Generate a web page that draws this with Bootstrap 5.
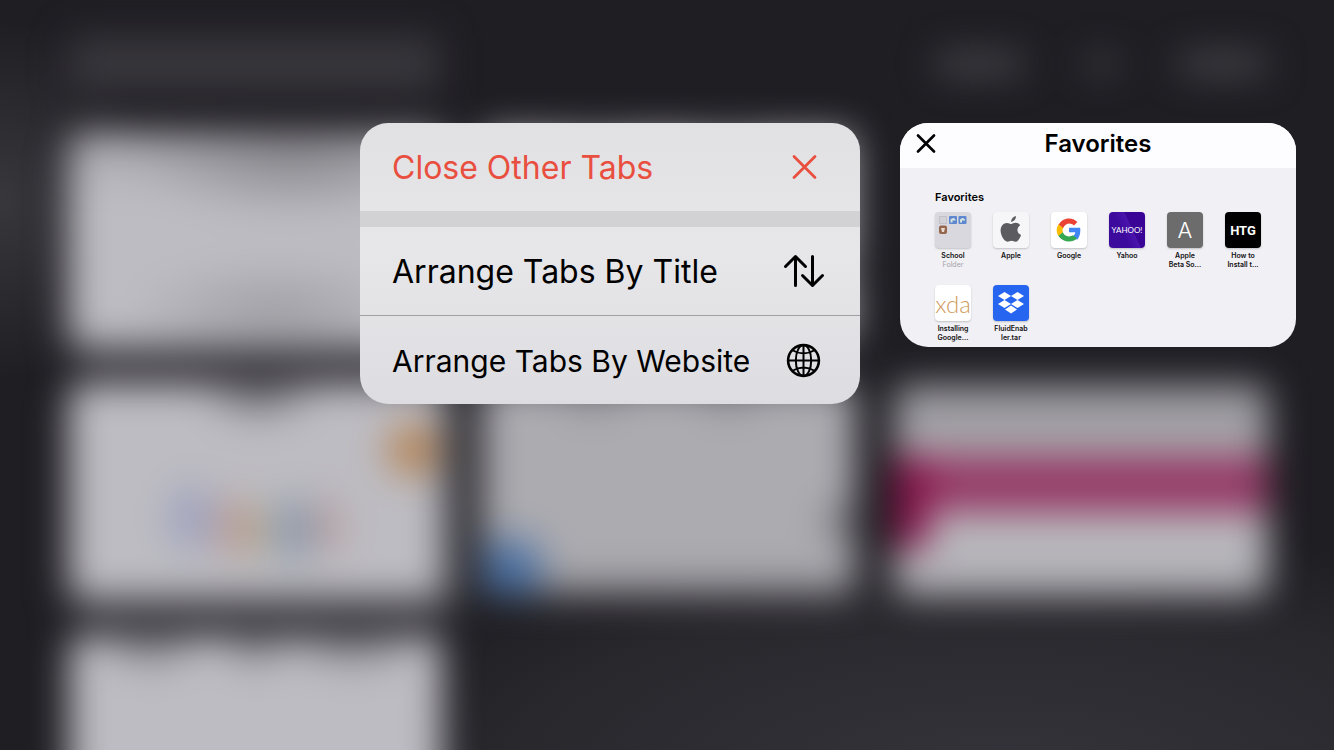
<!DOCTYPE html>
<html lang="en">
<head>
<meta charset="utf-8">
<meta name="viewport" content="width=device-width, initial-scale=1">
<title>Tabs</title>
<link href="https://cdn.jsdelivr.net/npm/bootstrap@5.3.0/dist/css/bootstrap.min.css" rel="stylesheet">
<style>
body { font-family: Inter, "Liberation Sans", sans-serif; background: #222126; color: #000; }

/* blurred tab overview behind the menu */
.overview { background: radial-gradient(ellipse 700px 260px at 1000px 780px, #35343a, #29282d 70%, transparent), radial-gradient(ellipse 160px 180px at 0 200px, #38373c, transparent), #1f1e23; }
.overview-blur { filter: blur(18px); padding: 36px 66px 0 69px; }
.overview-head { height: 56px; margin-bottom: 40px; }
.search-field { width: 370px; background: #38373c; }
.overview-grid { display: grid; grid-template-columns: repeat(3, 1fr); grid-auto-rows: 212px; gap: 40px; }
.overview-col-glow { box-shadow: 8px 14px 14px 8px #55545a; }
.tab-thumb { border-radius: 12px; background-color: #bdbcc2; }
.thumb-text { background-image: radial-gradient(ellipse 150px 50px at 55% 84%, #9f9ea3, transparent), radial-gradient(ellipse 170px 70px at 60% 8%, #88878c, transparent), linear-gradient(#a3a2a7, transparent 30%); }
.thumb-search { background-image:
  radial-gradient(circle 36px at 344px 66px, #b5814f 35%, transparent),
  radial-gradient(ellipse 32px 46px at 122px 134px, #8f97bd, transparent),
  radial-gradient(ellipse 24px 40px at 160px 142px, #b98f8c, transparent),
  radial-gradient(ellipse 24px 40px at 182px 146px, #b3a078, transparent),
  radial-gradient(ellipse 32px 46px at 224px 146px, #788ca2, transparent),
  radial-gradient(ellipse 22px 40px at 258px 142px, #b58f8f, transparent),
  radial-gradient(ellipse 64px 38px at 190px 4px, #66656a, transparent); }
.thumb-plain { background-color: #acabb0; background-image:
  radial-gradient(circle 46px at 28px 186px, #2f5f9e 15%, transparent),
  radial-gradient(ellipse 44px 26px at 100% 138px, #5d5c61, transparent),
  radial-gradient(ellipse 44px 40px at 30% 0, #88878c, transparent),
  radial-gradient(ellipse 44px 40px at 66% 0, #88878c, transparent),
  linear-gradient(#acabb000 85%, #88878c); }
.thumb-banner { background-image:
  linear-gradient(90deg, #86144a 34px, transparent 34px),
  linear-gradient(#953a66, #953a66),
  linear-gradient(#949398, #aaa9ae 30%, #bab9be 70%, #b0afb4);
  background-size: 100% 92px, 100% 56px, 100% 100%; background-position: 0 72px, 0 72px, 0 0; background-repeat: no-repeat; }
.thumb-titles { background-image: radial-gradient(ellipse 60px 40px at 22% 0, #77767b, transparent), radial-gradient(ellipse 44px 40px at 50% 0, #77767b, transparent), radial-gradient(ellipse 80px 40px at 76% 0, #77767b, transparent); }
.head-word { height: 22px; background: #48474c; border-radius: 10px; }
.head-word.wide { width: 90px; }
.head-word.slim { width: 26px; }

/* foreground */
.stage { padding: 123px 38px 0; gap: 40px; }
.menu-sheet { width: 500px; border-radius: 28px; background: linear-gradient(#e1e0e3, #e7e6e9 45%, #dddce0); overflow: hidden; }
.menu-row { height: 88px; padding: 2px 34px 0 32px; border: 0; background: none; font-size: 32px; color: inherit; }
.menu-row.danger { color: #e94f3f; }
.menu-row.compact { font-size: 30px; }
.menu-row svg { width: 44px; height: 44px; flex: none; }
.menu-break { height: 16px; background: #d2d1d3; }
.menu-line { border-top: 1px solid #a09fa3; }

.preview { width: 396px; height: 224px; border-radius: 28px; background: #f1f0f5; overflow: hidden; }
.preview-head { display: grid; grid-template-columns: 1fr auto 1fr; height: 45px; padding: 0 16px 4px; background: #fdfcff; }
.preview-title { font-size: 24px; font-weight: 600; }
.preview-head svg { width: 20px; height: 20px; }
.preview-body { padding: 22px 24px 0; }
.section-title { font-size: 11px; line-height: 14px; font-weight: 600; margin: 0 0 8px 11px; }
.fav-grid { display: grid; grid-template-columns: repeat(6, 1fr); grid-auto-rows: 64px; row-gap: 9px; }
.fav { font-size: 7px; line-height: 9px; font-weight: 600; color: #111; text-align: center; text-decoration: none; }
.fav-sub { color: #a4a3a8; font-weight: 400; }
.tile { width: 36px; height: 36px; border-radius: 4px; margin-bottom: 3px; box-shadow: 0 1px 2px #0003; overflow: hidden; line-height: 1; white-space: nowrap; }
.tile svg { width: 36px; height: 36px; }
.t-folder { background: #d9d8de; }
.t-apple { background: #f6f6f8; }
.t-dropbox { background: #2565ef; }
.t-yahoo { background: linear-gradient(65deg, #3d0a9e 40%, #4a14ad 60%, #3a0596 61%); color: #fff; font: 400 8px Lato, sans-serif; }
.t-beta { background: #6c6c6c; color: #fff; font: 300 22px Inter, sans-serif; }
.t-htg { background: #000; color: #fff; font: 700 13px "Liberation Sans Narrow", Roboto, sans-serif; }
.t-xda { background: #fff; color: #d09a5a; font: 300 24px Lato, sans-serif; }
</style>
</head>
<body class="vh-100 overflow-hidden position-relative">
<div class="overview position-absolute top-0 start-0 w-100 h-100 overflow-hidden" aria-hidden="true">
  <div class="overview-blur">
    <div class="overview-head d-flex align-items-center">
      <div class="search-field h-100"></div>
      <div class="d-flex align-items-center gap-5 ms-auto">
        <div class="head-word wide"></div><div class="head-word slim mx-3"></div><div class="head-word wide"></div>
      </div>
    </div>
    <div class="overview-grid">
      <div class="tab-thumb overview-col-glow thumb-text"></div>
      <div class="tab-thumb thumb-plain"></div>
      <div></div>
      <div class="tab-thumb overview-col-glow thumb-search"></div>
      <div class="tab-thumb thumb-plain"></div>
      <div class="tab-thumb thumb-banner"></div>
      <div class="tab-thumb thumb-titles"></div>
    </div>
  </div>
</div>

<main class="stage position-relative d-flex justify-content-end align-items-start">
  <div class="menu-sheet" role="menu">
    <button type="button" role="menuitem" class="menu-row danger w-100 d-flex align-items-center justify-content-between text-nowrap">Close Other Tabs
      <svg viewBox="0 0 44 44" fill="none" stroke="currentColor" stroke-width="2.8" stroke-linecap="round"><path d="M12 10.500l21 21M33 10.500l-21 21"/></svg></button>
    <div class="menu-break"></div>
    <button type="button" role="menuitem" class="menu-row w-100 d-flex align-items-center justify-content-between text-nowrap">Arrange Tabs By Title
      <svg viewBox="0 0 44 44" fill="none" stroke="currentColor" stroke-width="3" stroke-linecap="round" stroke-linejoin="round"><path d="M13.500 35.500V6.500M3.500 16.500l10-10 10 10M30.500 6.500v29M20.500 25.500l10 10 10-10"/></svg></button>
    <div class="menu-line"></div>
    <button type="button" role="menuitem" class="menu-row compact w-100 d-flex align-items-center justify-content-between text-nowrap">Arrange Tabs By Website
      <svg viewBox="0 0 44 44" fill="none" stroke="currentColor" stroke-width="2"><circle cx="21.500" cy="21.500" r="15.400" stroke-width="2.600"/><path d="M21.500 6v31M6 21.500h31M10 11q11.500 7 23 0M10 32q11.500-7 23 0"/><ellipse cx="21.500" cy="21.500" rx="7.700" ry="15.400"/></svg></button>
  </div>

  <section class="preview">
    <div class="preview-head align-items-center">
      <button type="button" class="btn p-0 border-0 d-flex justify-content-start" aria-label="Close tab"><svg viewBox="0 0 20 20" fill="none" stroke="#000" stroke-width="2.600" stroke-linecap="round"><path d="M2 1.500l16 16M18 1.500l-16 16"/></svg></button>
      <div class="preview-title">Favorites</div>
    </div>
    <div class="preview-body">
      <h2 class="section-title">Favorites</h2>
      <div class="fav-grid">
        <a href="#" class="fav"><div class="tile t-folder mx-auto"><svg viewBox="0 0 36 36"><rect x="4.500" y="4.500" width="7" height="7" fill="#d2d1d8" stroke="#c2c1c8"/><rect x="14" y="4" width="8" height="8" rx="1" fill="#5d87cf"/><path d="M15.500 10.500v-3q3-3 5 0v1h-3v2z" fill="#d5e2df"/><rect x="23.500" y="4" width="8" height="8" rx="1" fill="#5d87cf"/><path d="M25 10.500v-3q3-3 5 0v1h-3v2z" fill="#d5e2df"/><rect x="4" y="13.500" width="8" height="8.500" rx="2" fill="#93664d"/><path d="M6 16h4l-1 4H7z" fill="#eadbd0"/></svg></div>School<br><span class="fav-sub">Folder</span></a>
        <a href="#" class="fav"><div class="tile t-apple mx-auto"><svg viewBox="0 0 36 36" fill="#5c5b5f"><path d="M18.300 12.100c1-.1 2.200-1.300 4.300-1.300 2 0 3.700 1 4.600 2.400-3.900 2.500-3.700 7.900.9 9.700-1.100 3-3.200 6.700-5.400 6.800-1.600.1-2.100-1-4.100-1s-2.600 1-4.100 1c-3.600 0-6.900-6.700-6.900-11.100 0-5 3.200-7.700 6.300-7.700 2 0 3.400 1.200 4.400 1.200zM18.100 9.900c-.1-2.900 2-5.400 4.800-5.900.3 3-2.100 5.700-4.800 5.900z"/></svg></div>Apple</a>
        <a href="#" class="fav"><div class="tile mx-auto bg-white"><svg viewBox="-7 -7 62 62"><path fill="#ea4335" d="M24 13c3.500 0 6 1.200 8.500 3.300l6-6C35 6.400 30.500 4 24 4 16 4 9.100 8.600 5.800 15.300l7.900 6.100C15.500 16.800 19.500 13 24 13z"/><path fill="#4285f4" d="M43.500 24.500c0-1.600-.2-3.100-.4-4.500H24v8h10.900c-.5 2.500-1.900 5.600-4 7l7 5.800c3.500-3.300 5.600-9 5.600-16.300z"/><path fill="#fbbc05" d="M13.500 28.500a13 13 0 010-8.500l-7.700-6.100a20 20 0 000 20.700z"/><path fill="#34a853" d="M24 44c5.500 0 10.400-1.900 13.900-5.200l-7-5.800c-1.900 1.300-4.200 2-6.900 2-5 0-9-2.600-10.500-7l-7.700 6.100C9.200 39.800 15.500 44 24 44z"/></svg></div>Google</a>
        <a href="#" class="fav"><div class="tile t-yahoo mx-auto d-flex align-items-center justify-content-center">YAHOO!</div>Yahoo</a>
        <a href="#" class="fav"><div class="tile t-beta mx-auto d-flex align-items-center justify-content-center">A</div>Apple<br>Beta So...</a>
        <a href="#" class="fav"><div class="tile t-htg mx-auto d-flex align-items-center justify-content-center">HTG</div>How to<br>Install t...</a>
        <a href="#" class="fav"><div class="tile t-xda mx-auto d-flex align-items-center justify-content-center">xda</div>Installing<br>Google...</a>
        <a href="#" class="fav"><div class="tile t-dropbox mx-auto"><svg viewBox="0 0 36 36" fill="#fff"><path d="M11.500 7l6.500 4-6.500 4L5 11zM24.500 7l6.500 4-6.500 4-6.500-4zM11.500 15l6.500 4-6.500 4L5 19zM24.500 15l6.500 4-6.500 4-6.500-4zM18 20.500l6 4-6 4-6-4z"/></svg></div>FluidEnab<br>ler.tar</a>
      </div>
    </div>
  </section>
</main>
<script src="https://cdn.jsdelivr.net/npm/bootstrap@5.3.0/dist/js/bootstrap.bundle.min.js"></script>
</body>
</html>
